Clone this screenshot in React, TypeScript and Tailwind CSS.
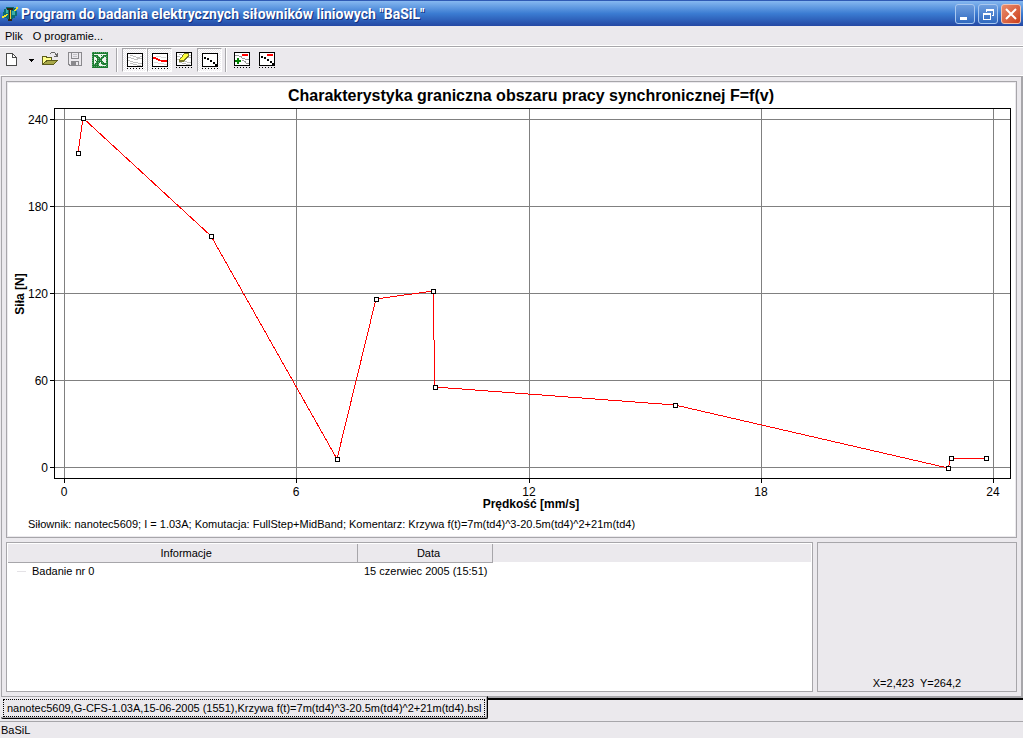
import { useState } from 'react';
import type { ReactNode } from 'react';

const points: [number, number][] = [
  [0.36, 216.5],
  [0.49, 240.7],
  [3.8, 159.3],
  [7.05, 5.5],
  [8.06, 115.9],
  [9.53, 121.4],
  [9.59, 55.2],
  [15.79, 42.8],
  [22.84, -0.7],
  [22.92, 6.2],
  [23.82, 6.2],
];

const xTicks = [0, 6, 12, 18, 24];
const yTicks = [0, 60, 120, 180, 240];

const plot = { left: 46, right: 1002, top: 3, bottom: 373 };

const sx = (v: number) => Math.round(56 + v * 38.71);
const sy = (f: number) => Math.round(362 - f * 1.45);

function Chart() {
  const line = points.map(([v, f]) => `${sx(v)},${sy(f)}`).join(' ');

  return (
    <svg
      viewBox="0 0 1007 407"
      className="block h-auto w-full"
      shapeRendering="crispEdges"
      role="img"
      aria-label="Siła w funkcji prędkości"
    >
      {xTicks.map((t) => (
        <g key={t}>
          <rect x={sx(t)} y={plot.top} width="1" height={plot.bottom - plot.top} fill="#808080" />
          <rect x={sx(t)} y={plot.bottom} width="1" height="5" fill="#000" />
          <text x={sx(t)} y="391" textAnchor="middle" fontSize="12">
            {t}
          </text>
        </g>
      ))}
      {yTicks.map((t) => (
        <g key={t}>
          <rect x={plot.left} y={sy(t)} width={plot.right - plot.left} height="1" fill="#808080" />
          <rect x={plot.left - 4} y={sy(t)} width="4" height="1" fill="#000" />
          <text x="40" y={sy(t) + 5} textAnchor="end" fontSize="12">
            {t}
          </text>
        </g>
      ))}

      {/* Frame */}
      <rect x={plot.left} y={plot.top} width={plot.right - plot.left + 1} height="1" />
      <rect x={plot.left} y={plot.bottom} width={plot.right - plot.left + 1} height="1" />
      <rect x={plot.left} y={plot.top} width="1" height={plot.bottom - plot.top} />
      <rect x={plot.right} y={plot.top} width="1" height={plot.bottom - plot.top} />

      <polyline points={line} fill="none" stroke="#f00" strokeWidth="1" />
      {points.map(([v, f]) => (
        <g key={v}>
          <rect x={sx(v) - 2} y={sy(f) - 2} width="5" height="5" fill="#000" />
          <rect x={sx(v) - 1} y={sy(f) - 1} width="3" height="3" fill="#fff" />
        </g>
      ))}

      <text x="523" y="403" textAnchor="middle" fontSize="12" fontWeight="bold">
        Prędkość [mm/s]
      </text>
      <text
        transform="translate(16 189) rotate(-90)"
        textAnchor="middle"
        fontSize="12"
        fontWeight="bold"
      >
        Siła [N]
      </text>
    </svg>
  );
}

function Icon({ children }: { children: ReactNode }) {
  return (
    <svg viewBox="0 0 16 16" className="h-4 w-4 shrink-0" shapeRendering="crispEdges">
      {children}
    </svg>
  );
}

function NewIcon() {
  return (
    <Icon>
      <path d="M3 1h7v1h1v1h1v1h1v1h1v9H3z" fill="#4a4a4a" />
      <path d="M4 2h5v4h4v7H4zM10 3h1v2h-1zM11 4h1v1h-1z" fill="#fff" />
    </Icon>
  );
}

function OpenIcon() {
  return (
    <Icon>
      <path d="M0 4h5v1h5v3h6v1h-1v1h-1v1h-1v1h-1v1H0z" fill="#5c5c1c" />
      <path d="M1 5h3v1h5v2H4v1H3v1H2v1H1z" fill="#ffff8c" />
      <path d="M5 9h9v1h-1v1h-1v1H2v-1h1v-1h2z" fill="#a8a848" />
      <path d="M8 1h1v1H8zM9 0h4v1H9zM13 1h1v1h-1zM15 1h1v4h-4V4h2V3h-1V2h2z" fill="#666" />
    </Icon>
  );
}

function SaveIcon() {
  return (
    <Icon>
      <path
        d="M1 0h14v14H2v-1H1zM2 1v11h1v1h11V1h-2v6H4V1z"
        fill="#8a898d"
        fillRule="evenodd"
      />
      <path d="M4 1h8v6H4z" fill="#8a898d" />
      <path d="M5 1h6v5H5z" fill="#ebe9ed" />
      <path d="M6 2h4v1H6zM6 4h4v1H6z" fill="#c4c3c8" />
      <path d="M4 9h8v4H4z" fill="#8a898d" />
      <path d="M9 10h2v3H9z" fill="#ebe9ed" />
    </Icon>
  );
}

function ExcelIcon() {
  return (
    <Icon>
      <defs>
        <pattern id="weave" width="2" height="2" patternUnits="userSpaceOnUse">
          <path d="M0 0h2v2H0z" fill="#1c7c30" />
          <path d="M0 0h1v1H0z" fill="#5ca870" />
        </pattern>
      </defs>
      <path d="M0 0h16v16H0z" fill="url(#weave)" />
      <path d="M2 2h12v12H2z" fill="#eef5ee" />
      <path
        d="M2 3h4v1h1v1h1v1h1V5h1V4h1V3h3v2h-2v1h-1v1h-1v2h1v1h1v1h2v2h-4v-1H9v-2H8v1H7v3H2v-2h1v-1h1V9h1V7H5V6H4V5H2z"
        fill="url(#weave)"
      />
      <path d="M9 3h1v1H9zM3 8h1v1H3zM11 12h2v1h-2z" fill="#1c7c30" />
    </Icon>
  );
}

// Framed thumbnail shared by all of the plot buttons
function PlotIcon({ children }: { children: ReactNode }) {
  return (
    <Icon>
      <path d="M0 0h16v14H0z" fill="#000" />
      <path d="M1 1h14v12H1z" fill="#fff" />
      <path d="M0 15h1v1H0zM3 15h1v1H3zM6 15h1v1H6zM9 15h1v1H9zM12 15h1v1h-1zM15 15h1v1h-1z" />
      {children}
    </Icon>
  );
}

const grayCurves = (
  <path
    d="M1 4h3v1h3v1h3V5h5v1h-4v1H7V6H4V5H1zM1 7h2v1h3v1h5v1h4v1h-4v-1H6V9H3V8H1zM3 2h3v1h3v1h4V3h2v1h-2v1H9V4H6V3H3zM3 10h3v1h4v1h4v1h-4v-1H6v-1H3z"
    fill="#c0c0c0"
  />
);

const dots = 'M2 4h2v2H2zM5 5h2v2H5zM8 7h2v2H8zM11 9h2v2h-2zM13 11h2v2h-2z';

function CurvesIcon() {
  return <PlotIcon>{grayCurves}</PlotIcon>;
}

function RedCurveIcon() {
  return (
    <PlotIcon>
      <path d="M4 3h5v1h5v1H9V4H4zM2 9h4v1h6v1h3v1h-3v-1H6v-1H2z" fill="#dcdcdc" />
      <path d="M1 4h3v1h2v1h2v1h7v2H9V8H6V7H4V6H1z" fill="#f00" />
    </PlotIcon>
  );
}

function EraserIcon() {
  return (
    <PlotIcon>
      {grayCurves}
      <path d="M8 1h5v4h-1v1h-1v1h-1v1H9v1H8v1H3V7h1V6h1V5h1V3h1V2h1z" fill="#77752a" />
      <path d="M8 2h4v2h-1v1h-1v1H9v1H8v1H4V7h1V6h1V5h1V3h1z" fill="#ffff3c" />
    </PlotIcon>
  );
}

function PointsIcon() {
  return (
    <PlotIcon>
      <path d={dots} fill="#000" />
    </PlotIcon>
  );
}

function AddCurveIcon() {
  return (
    <PlotIcon>
      <path
        d="M1 3h4v1h3v2h3v1h4v1h-4V7H8V6H7V5H5V4H1zM8 8h2v1h2v2h3v1h-3v-1h-1v-1h-1V9H8z"
        fill="#999"
      />
      <path d="M8 2h6v2H8z" fill="#f00" />
      <path d="M3 6h2v2h2v2H5v2H3v-2H1V8h2z" fill="#008000" />
    </PlotIcon>
  );
}

function AddPointsIcon() {
  return (
    <PlotIcon>
      <path d={dots} fill="#000" />
      <path d="M8 2h6v2H8z" fill="#f00" />
    </PlotIcon>
  );
}

interface ToolButtonProps {
  label: string;
  pressed?: boolean;
  onClick?: () => void;
  children: ReactNode;
}

function ToolButton({ label, pressed, onClick, children }: ToolButtonProps) {
  return (
    <button
      type="button"
      aria-label={label}
      title={label}
      aria-pressed={pressed}
      onClick={onClick}
      className={`flex h-6 w-[25px] shrink-0 items-center justify-center border ${
        pressed
          ? 'border-t-[#a7a6aa] border-r-white border-b-white border-l-[#a7a6aa] bg-[repeating-conic-gradient(#ffffff_0_25%,#ebe9ed_0_50%)] bg-size-[2px_2px] pt-0.5 pl-px'
          : 'border-transparent pr-px'
      }`}
    >
      {children}
    </button>
  );
}

function Separator() {
  return <div className="h-6 w-0.5 shrink-0 border-r border-l border-r-white border-l-[#a7a6aa]" />;
}

function TitleBar() {
  const blueButton =
    'flex h-5 w-5 items-center justify-center rounded-[3px] border border-[#a9c8f0] bg-linear-to-b from-[#6f9fdf] to-[#2f69c0]';

  return (
    <header className="flex h-[26px] items-center border-t border-[#2f5ab4] bg-linear-to-b from-[#86b8f0] via-[#3b7cd2] to-[#2448a4] pr-0.5 pl-0.5">
      <svg viewBox="0 0 16 16" className="h-4 w-4 shrink-0" shapeRendering="crispEdges">
        <path d="M4 1h8v1h2v3h1v5h-2v2h-2v1H5v-1H3v-2H1V6h1V3h2z" fill="#0c6c74" />
        <path d="M4 3h4v1H6v3H4zM10 5h3v4h-3z" fill="#3cb0a8" />
        <path d="M5 2h6v2H9v9h1v2H6v-2h1V4H5z" fill="#352610" />
        <path d="M8 4h1v9H8z" fill="#f0c83c" />
        <path d="M14 1h2v2h-1v1h-1v1h-2V4h1V3h1zM0 10h2V9h2V8h2v1H5v1H4v1H2v1H0z" fill="#f2e22c" />
      </svg>
      <h1 className="ml-[3px] flex-1 truncate text-[14px] leading-5 font-bold text-white [font-family:Roboto,'Noto_Sans',sans-serif] [text-shadow:1px_1px_0_#16307c]">
        Program do badania elektrycznych siłowników liniowych "BaSiL"
      </h1>
      <div className="flex gap-[3px]">
        <button type="button" aria-label="Minimalizuj" className={blueButton}>
          <svg viewBox="0 0 16 16" className="h-4 w-4">
            <path d="M3 11h7v3H3z" fill="#fff" />
          </svg>
        </button>
        <button type="button" aria-label="Przywróć" className={blueButton}>
          <svg viewBox="0 0 16 16" className="h-4 w-4" shapeRendering="crispEdges">
            <path d="M6 3h8v7h-2V9h1V5H7v1H6zM3 7h8v7H3zM4 9v4h6V9z" fill="#fff" fillRule="evenodd" />
          </svg>
        </button>
        <button
          type="button"
          aria-label="Zamknij"
          className="flex h-5 w-5 items-center justify-center rounded-[3px] border border-[#f0c4b4] bg-linear-to-br from-[#e88c6c] to-[#cc3c14]"
        >
          <svg viewBox="0 0 16 16" className="h-4 w-4">
            <path d="M3 3l10 10M13 3L3 13" stroke="#fff" strokeWidth="2" />
          </svg>
        </button>
      </div>
    </header>
  );
}

function Toolbar() {
  const [curves, setCurves] = useState(true);
  const [current, setCurrent] = useState(true);
  const [markers, setMarkers] = useState(true);

  return (
    <div className="flex h-[29px] items-start border-t border-b border-white pl-[3px]">
      <div className="flex h-6">
        <button type="button" aria-label="Nowy" title="Nowy" className="flex w-[22px] items-center">
          <NewIcon />
        </button>
        <button
          type="button"
          aria-label="Rodzaj dokumentu"
          className="flex w-[13px] items-center justify-center"
        >
          <svg viewBox="0 0 5 3" className="h-[3px] w-[5px]" shapeRendering="crispEdges">
            <path d="M0 0h5v1H4v1H3v1H2V2H1V1H0z" />
          </svg>
        </button>
        <ToolButton label="Otwórz">
          <OpenIcon />
        </ToolButton>
        <ToolButton label="Zapisz">
          <SaveIcon />
        </ToolButton>
        <ToolButton label="Eksport do Excela">
          <ExcelIcon />
        </ToolButton>
      </div>
      <div className="mr-1 ml-[3px]">
        <Separator />
      </div>
      <div className="flex">
        <ToolButton label="Krzywe" pressed={curves} onClick={() => setCurves(!curves)}>
          <CurvesIcon />
        </ToolButton>
        <ToolButton label="Bieżąca krzywa" pressed={current} onClick={() => setCurrent(!current)}>
          <RedCurveIcon />
        </ToolButton>
        <ToolButton label="Wyczyść">
          <EraserIcon />
        </ToolButton>
        <ToolButton label="Punkty" pressed={markers} onClick={() => setMarkers(!markers)}>
          <PointsIcon />
        </ToolButton>
      </div>
      <div className="mx-[3px]">
        <Separator />
      </div>
      <ToolButton label="Dodaj krzywą">
        <AddCurveIcon />
      </ToolButton>
      <ToolButton label="Dodaj punkty">
        <AddPointsIcon />
      </ToolButton>
    </div>
  );
}

function ResultsTable() {
  return (
    <div className="flex-1 border border-[#a7a6aa] bg-white p-px">
      <table className="w-full table-fixed border-collapse">
        <colgroup>
          <col className="w-[349px]" />
          <col className="w-[135px]" />
          <col />
        </colgroup>
        <thead>
          <tr className="h-[18px] bg-[#ebe9ed]">
            <th className="border-r border-b border-[#a7a6aa] p-0 pl-2 font-normal">Informacje</th>
            <th className="border-r border-b border-[#a7a6aa] p-0 pl-2 font-normal">Data</th>
            <td className="p-0" />
          </tr>
        </thead>
        <tbody>
          <tr className="h-[18px]">
            <td className="p-0">
              <div className="flex items-center pl-[9px]">
                <span className="mr-1.5 h-px w-[9px] bg-[#e4e2e6]" />
                Badanie nr 0
              </div>
            </td>
            <td className="p-0 pl-[7px] whitespace-nowrap">15 czerwiec 2005 (15:51)</td>
            <td className="p-0" />
          </tr>
        </tbody>
      </table>
    </div>
  );
}

export default function App() {
  return (
    <div className="flex min-h-screen flex-col bg-[#ebe9ed] text-[11px] leading-[14px] text-black [font-family:'Liberation_Sans',Arial,sans-serif]">
      <TitleBar />

      <nav className="flex h-5 items-center gap-2.5 border-b border-white pl-[5px]">
        <button type="button">Plik</button>
        <button type="button">O programie...</button>
      </nav>
      <div className="h-px bg-[#a7a6aa]" />
      <Toolbar />

      <main className="ml-px flex flex-1 flex-col gap-1 border-t border-r-2 border-l border-[#a7a6aa] p-1">
        <section className="border border-[#a7a6aa] p-px">
          <div className="bg-white pb-[5px]">
            <h2 className="pt-1 pl-[39px] text-center text-[16px] leading-[18px] font-bold">
              Charakterystyka graniczna obszaru pracy synchronicznej F=f(v)
            </h2>
            <Chart />
            <p className="mt-[5px] pl-5">
              Siłownik: nanotec5609; I = 1.03A; Komutacja: FullStep+MidBand; Komentarz: Krzywa
              f(t)=7m(td4)^3-20.5m(td4)^2+21m(td4)
            </p>
          </div>
        </section>

        <div className="flex min-h-[120px] flex-1 gap-1">
          <ResultsTable />
          <aside className="flex w-[200px] items-end justify-center border border-[#a7a6aa] pb-px whitespace-pre">
            X=2,423  Y=264,2
          </aside>
        </div>
      </main>

      <div className="ml-px flex h-[25px] items-start">
        <button
          type="button"
          className="h-[23px] rounded-b-[2px] border-t border-r border-b border-t-[#a7a6aa] border-r-black border-b-black px-0.5 shadow-[inset_-1px_-1px_0_#a7a6aa]"
        >
          <span className="block border border-dotted border-black px-[3px] leading-4 whitespace-nowrap">
            nanotec5609,G-CFS-1.03A,15-06-2005 (1551),Krzywa f(t)=7m(td4)^3-20.5m(td4)^2+21m(td4).bsl
          </span>
        </button>
        <div className="h-1 flex-1 border-t-2 border-b-2 border-t-[#a7a6aa] border-b-black" />
      </div>

      <footer className="h-[17px] border-t border-[#a7a6aa] pt-px pl-px">BaSiL</footer>
    </div>
  );
}
